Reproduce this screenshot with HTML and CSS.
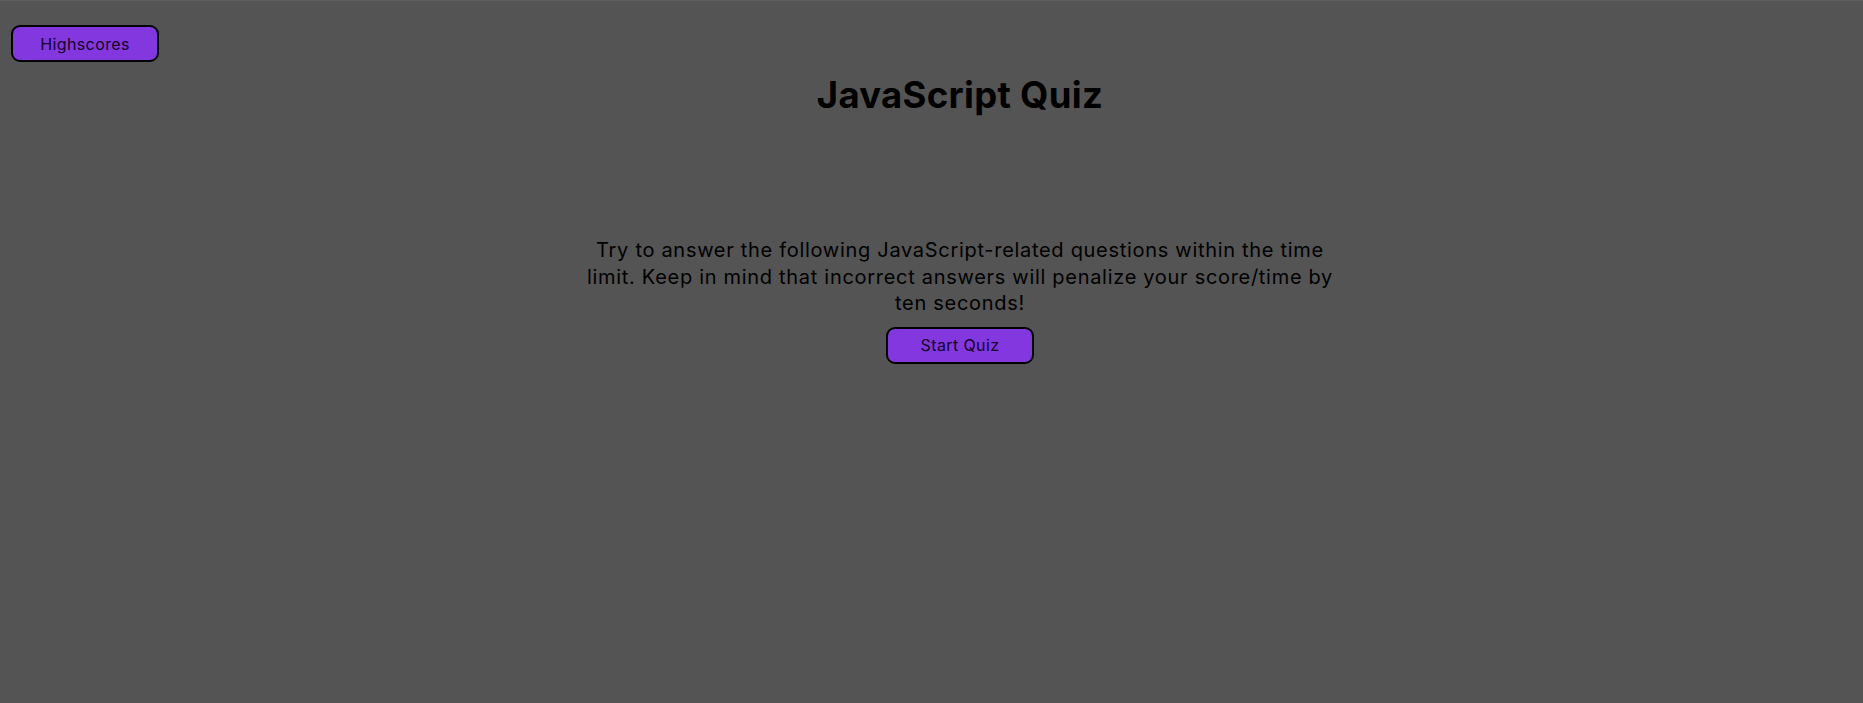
FILE: index.html
```html
<!DOCTYPE html>
<html lang="en">
<head>
<meta charset="utf-8">
<title>JavaScript Quiz</title>
<link rel="stylesheet" href="styles.css">
</head>
<body>
<header class="top-bar">
  <button class="btn">Highscores</button>
</header>
<main class="quiz">
  <h1 class="quiz-title">JavaScript Quiz</h1>
  <section class="intro">
    <p class="intro-text">Try to answer the following JavaScript-related questions within the time limit. Keep in mind that incorrect answers will penalize your score/time by ten seconds!</p>
    <button class="btn">Start Quiz</button>
  </section>
</main>
</body>
</html>
```
FILE: styles.css
```css
html, body {
  margin: 0;
  padding: 0;
}
body {
  background: #545454;
  border-top: 1px solid #5e5e5e;
  min-height: 702px;
  color: #000;
  font-family: Inter, "Noto Sans", sans-serif;
}
.top-bar {
  display: flex;
  padding: 24px 11px 0;
}
.btn {
  width: 148px;
  height: 37px;
  box-sizing: border-box;
  background: #8338df;
  border: 2px solid #000;
  border-radius: 9px;
  color: #14002a;
  font-family: Inter, "Noto Sans", sans-serif;
  font-size: 16px;
  letter-spacing: 0.4px;
  padding: 0;
  cursor: pointer;
}
.quiz {
  display: flex;
  flex-direction: column;
  align-items: center;
  padding-left: 57px;
}
.quiz-title {
  margin: 11px 0 0;
  font-size: 36.5px;
  line-height: 44px;
  font-weight: 700;
  letter-spacing: 0.3px;
}
.intro {
  display: flex;
  flex-direction: column;
  align-items: center;
  margin-top: 120px;
  width: 758px;
}
.intro-text {
  margin: 0 0 10px;
  text-align: center;
  font-size: 20px;
  line-height: 26.5px;
  letter-spacing: 0.7px;
}
```
